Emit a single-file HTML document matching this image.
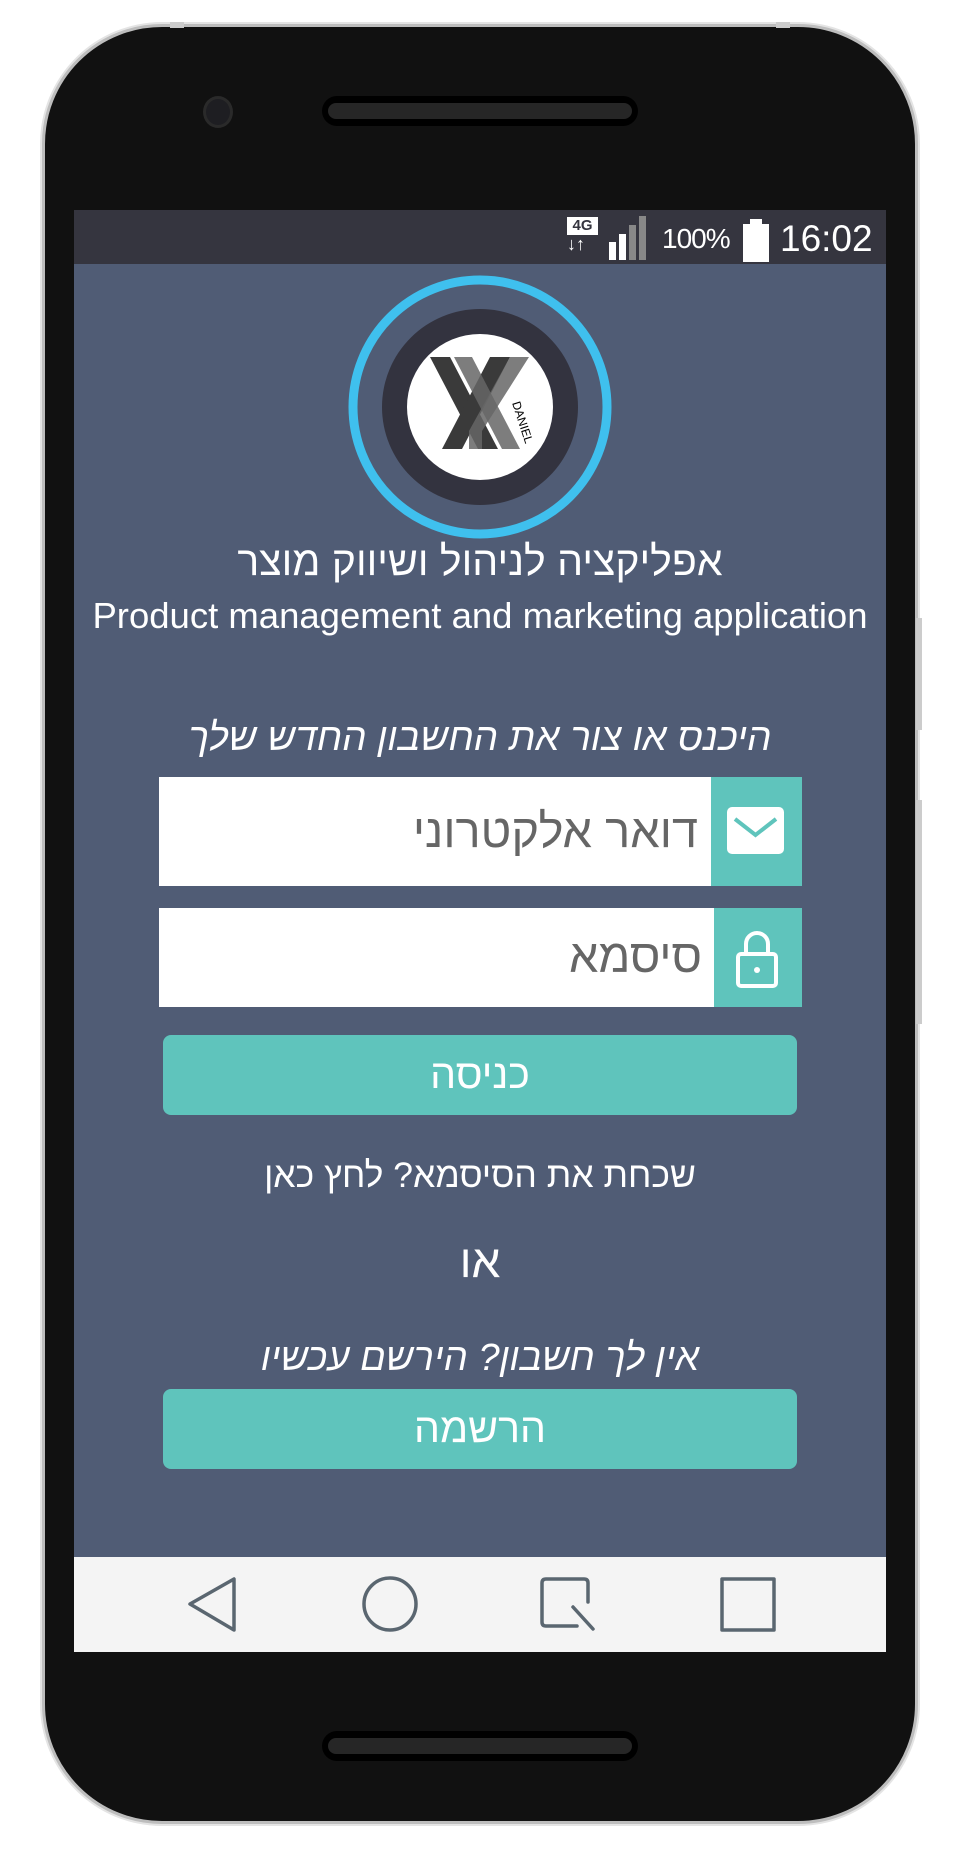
<!DOCTYPE html>
<html><head><meta charset="utf-8"><style>
*{margin:0;padding:0;box-sizing:border-box}
body{width:966px;height:1850px;background:#fff;position:relative;overflow:hidden;font-family:"Liberation Sans","Noto Sans CJK SC",sans-serif}
.abs{position:absolute}
.phone{left:42px;top:24px;width:876px;height:1800px;border-radius:120px;background:#111;border:3px solid #bdbdbd;box-shadow:0 0 0 2px #e4e4e4}
.screen{left:74px;top:210px;width:812px;height:1442px;background:#505c75;overflow:hidden}
.status{left:0;top:0;width:812px;height:54px;background:#35353f;color:#fff}
.t{position:absolute;left:0;width:812px;text-align:center;color:#fff;direction:rtl;white-space:nowrap}
.field{position:absolute;background:#fff;left:85px;width:643px}
.icon{position:absolute;right:0;top:0;bottom:0;width:91px;background:#5fc4bc}
.btn{position:absolute;left:89px;width:634px;height:80px;background:#5fc4bc;border-radius:8px;color:#fff;font-size:41px;text-align:center;line-height:78px;direction:rtl}
.nav{left:0;top:1347px;width:812px;height:95px;background:#f4f4f4}
</style></head><body>
<div class="abs phone"></div>
<div class="abs" style="left:170px;top:22px;width:14px;height:6px;background:#ccc"></div>
<div class="abs" style="left:776px;top:22px;width:14px;height:6px;background:#ccc"></div>
<div class="abs" style="left:916px;top:618px;width:6px;height:112px;background:#ccc"></div>
<div class="abs" style="left:916px;top:800px;width:6px;height:224px;background:#ccc"></div>
<div class="abs" style="left:203px;top:96px;width:30px;height:32px;border-radius:50%;background:#1e1e22;border:3px solid #2a2a2a"></div>
<div class="abs" style="left:322px;top:96px;width:316px;height:30px;border-radius:15px;background:#000"></div>
<div class="abs" style="left:328px;top:103px;width:304px;height:16px;border-radius:8px;background:#262626"></div>
<div class="abs" style="left:322px;top:1731px;width:316px;height:30px;border-radius:15px;background:#000"></div>
<div class="abs" style="left:328px;top:1738px;width:304px;height:16px;border-radius:8px;background:#262626"></div>

<div class="abs screen">
 <div class="abs status">
  <div class="abs" style="left:493px;top:7px;width:31px;height:18px;background:#fff;color:#35353f;font-size:15px;font-weight:bold;text-align:center;line-height:18px">4G</div>
  <div class="abs" style="left:493px;top:24px;color:#fff;font-size:18px;font-weight:bold;line-height:20px">↓↑</div>
  <div class="abs" style="left:535px;top:32px;width:7px;height:18px;background:#fff"></div>
  <div class="abs" style="left:545px;top:24px;width:7px;height:26px;background:#fff"></div>
  <div class="abs" style="left:555px;top:15px;width:7px;height:35px;background:#888"></div>
  <div class="abs" style="left:565px;top:6px;width:7px;height:44px;background:#888"></div>
  <div class="abs" style="left:588px;top:12px;font-size:28px;line-height:34px;letter-spacing:-1px">100%</div>
  <div class="abs" style="left:669px;top:14px;width:26px;height:38px;background:#fff"></div>
  <div class="abs" style="left:676px;top:9px;width:12px;height:6px;background:#fff"></div>
  <div class="abs" style="left:706px;top:8px;font-size:37px;line-height:42px">16:02</div>
 </div>
 <svg class="abs" style="left:270px;top:61px" width="272" height="272" viewBox="0 0 272 272">
  <circle cx="136" cy="136" r="127" fill="none" stroke="#3fc0ee" stroke-width="9"/>
  <circle cx="136" cy="136" r="98" fill="#33333f"/>
  <circle cx="136" cy="136" r="73" fill="#fff"/>
  <polygon points="86,86 106,86 154,178 134,178" fill="#3a3a3a"/>
  <polygon points="166,86 146,86 98,178 118,178" fill="#3a3a3a"/>
  <polygon points="110,86 128,86 176,178 158,178" fill="#666" opacity=".85"/>
  <polygon points="185,86 166,86 125,160 125,178 138,178 138,160" fill="#666" opacity=".85"/>
  <text x="0" y="0" transform="translate(168,132) rotate(72)" font-size="12" font-family="Liberation Sans" fill="#000">DANIEL</text>
 </svg>
 <div class="t" style="top:326px;font-size:41px;line-height:50px">אפליקציה לניהול ושיווק מוצר</div>
 <div class="t" style="top:384px;font-size:36.5px;line-height:44px;direction:ltr">Product management and marketing application</div>
 <div class="t" style="top:506px;font-size:38.5px;line-height:44px;font-style:italic">היכנס או צור את החשבון החדש שלך</div>
 <div class="field" style="top:567px;height:109px">
  <div class="icon"><svg style="position:absolute;left:14px;top:28px" width="61" height="52" viewBox="0 0 61 52"><rect x="2" y="2" width="57" height="47" rx="5" fill="#fff"/><path d="M10 14 L30.5 30 L51 14" fill="none" stroke="#5fc4bc" stroke-width="4"/></svg></div>
  <div style="position:absolute;right:104px;top:27px;font-size:47px;line-height:54px;color:#666;direction:rtl">דואר אלקטרוני</div>
 </div>
 <div class="field" style="top:698px;height:99px">
  <div class="icon" style="width:88px"><svg style="position:absolute;left:20px;top:22px" width="46" height="58" viewBox="0 0 46 58"><path d="M12 25 V14 A11 11 0 0 1 34 14 V25" fill="none" stroke="#fff" stroke-width="4"/><rect x="4" y="24" width="38" height="32" rx="3" fill="none" stroke="#fff" stroke-width="4"/><circle cx="23" cy="40" r="3" fill="#fff"/></svg></div>
  <div style="position:absolute;right:100px;top:21px;font-size:46.5px;line-height:54px;color:#666;direction:rtl">סיסמא</div>
 </div>
 <div class="btn" style="top:825px">כניסה</div>
 <div class="t" style="top:942px;font-size:35.5px;line-height:46px">שכחת את הסיסמא? לחץ כאן</div>
 <div class="t" style="top:1023px;font-size:46px;line-height:56px">או</div>
 <div class="t" style="top:1126px;font-size:38px;line-height:44px;font-style:italic">אין לך חשבון? הירשם עכשיו</div>
 <div class="btn" style="top:1179px">הרשמה</div>
 <div class="abs nav">
  <svg class="abs" style="left:0;top:0" width="812" height="95" viewBox="0 0 812 95">
   <g fill="none" stroke="#5a6670" stroke-width="3.5" stroke-linejoin="round" stroke-linecap="round">
    <path d="M160 22 L160 73 L116 47 Z"/>
    <ellipse cx="316" cy="47" rx="26" ry="26"/>
    <path d="M514 45 V26 Q514 22 510 22 H472 Q468 22 468 26 V65 Q468 69 472 69 H503"/>
    <path d="M499 50 L519 72"/>
    <rect x="648" y="22" width="52" height="51"/>
   </g>
  </svg>
 </div>
</div>
</body></html>
